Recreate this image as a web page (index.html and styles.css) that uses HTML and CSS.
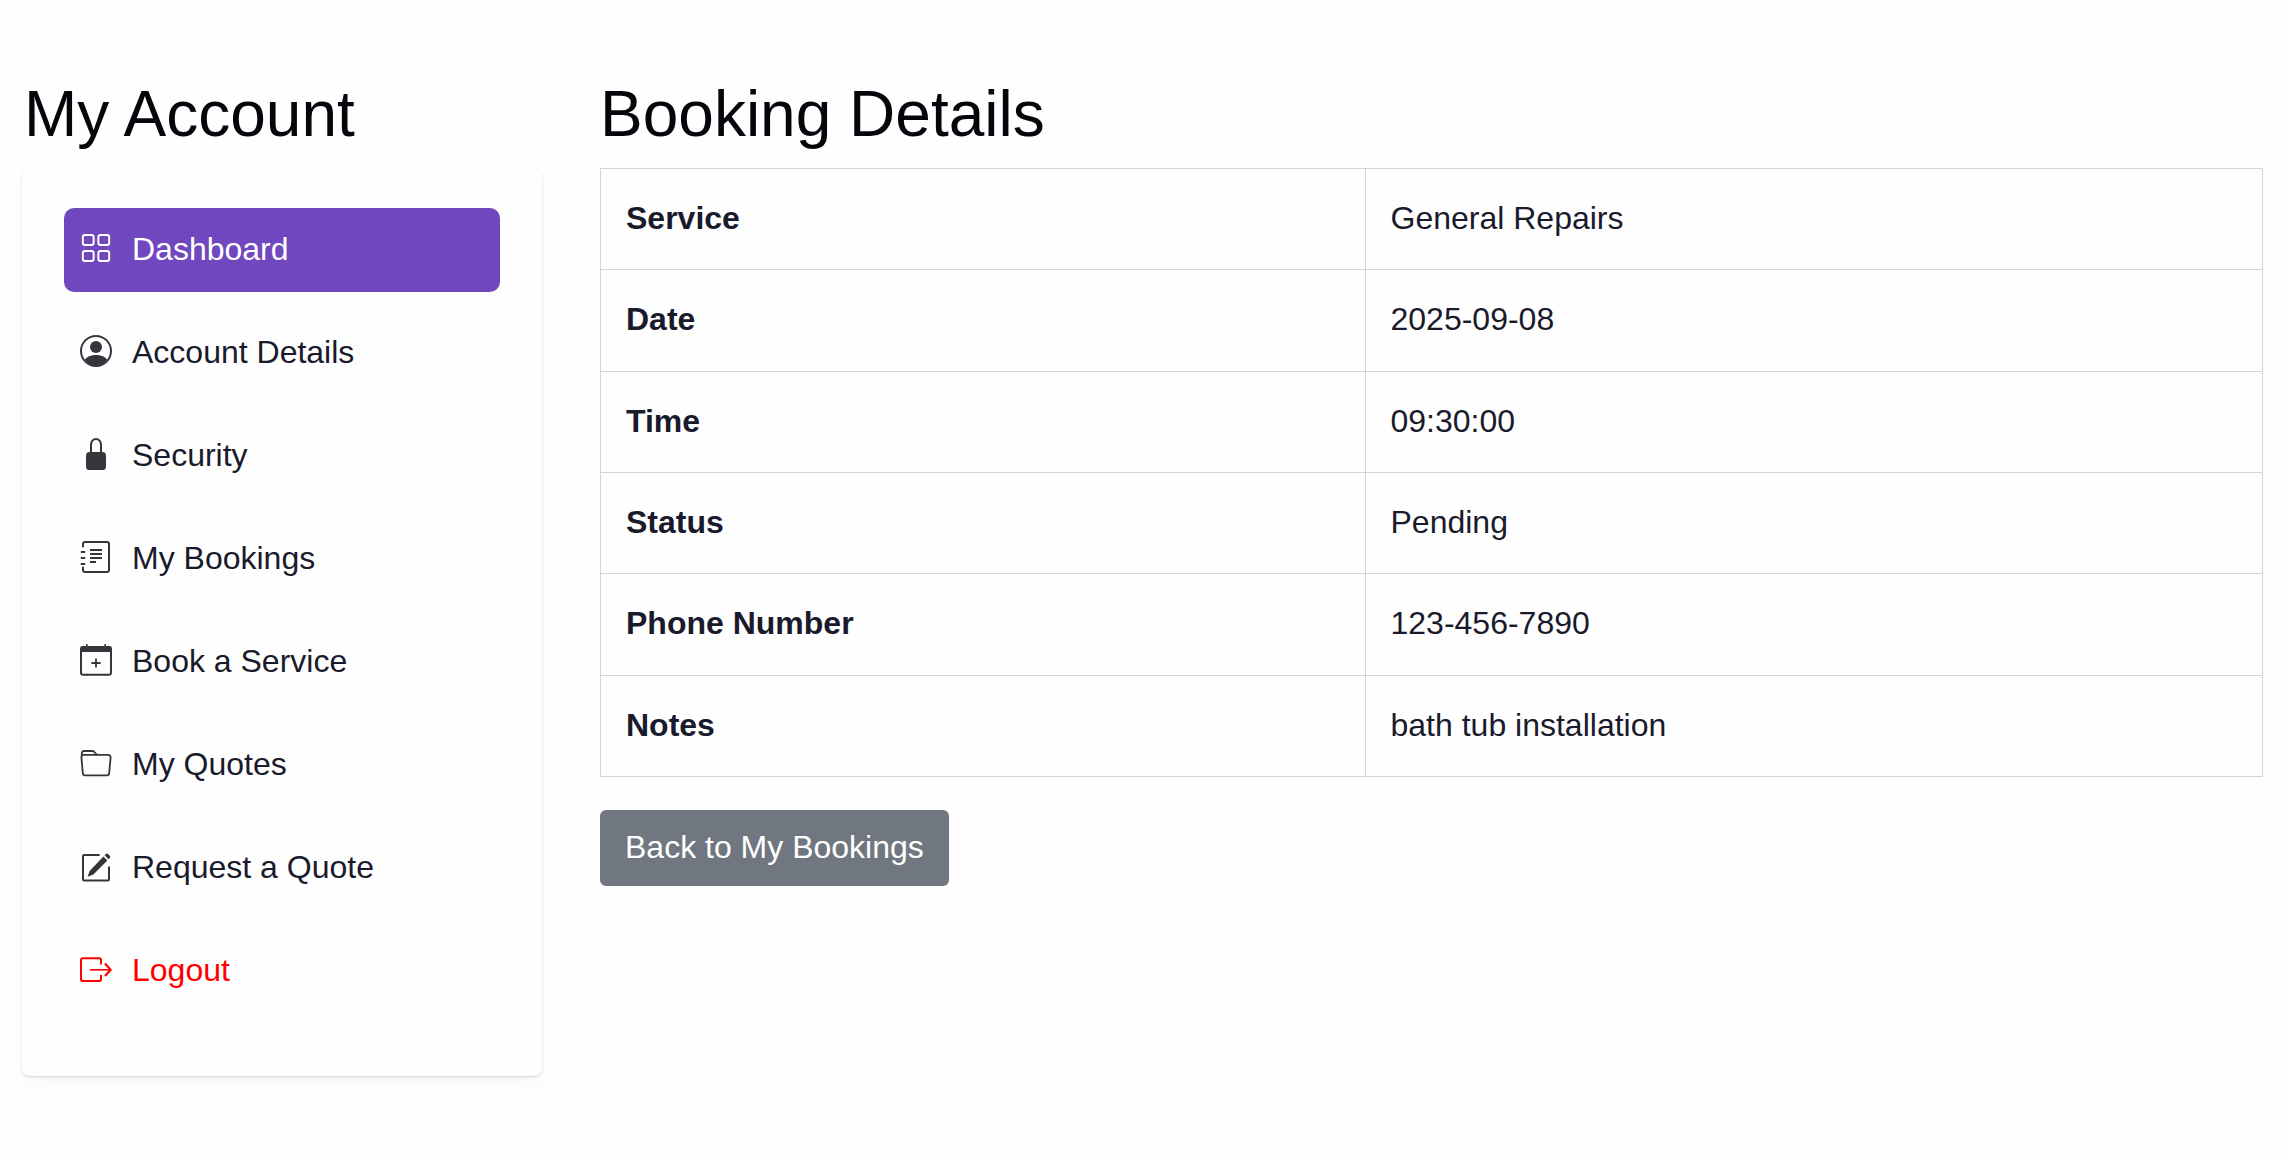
FILE: index.html
```html
<!DOCTYPE html>
<html lang="en">
<head>
    <meta charset="UTF-8">
    <meta name="viewport" content="width=device-width, initial-scale=1.0">
    <title>Booking Details</title>
    <link rel="stylesheet" href="styles.css">
</head>
<body>
    <div class="page">
        <!-- Account menu -->
        <aside class="sidebar">
            <h2>My Account</h2>
            <nav class="account-nav">
                <ul>
                    <li>
                        <a href="#dashboard" class="nav-link active">
                            <svg class="icon" viewBox="0 0 16 16" aria-hidden="true">
                                <g fill="none" stroke="currentColor">
                                    <rect x="1.400" y="1.500" width="5.400" height="5" rx="1"/>
                                    <rect x="9.200" y="1.500" width="5.400" height="5" rx="1"/>
                                    <rect x="1.400" y="9.500" width="5.400" height="5" rx="1"/>
                                    <rect x="9.200" y="9.500" width="5.400" height="5" rx="1"/>
                                </g>
                            </svg>
                            Dashboard
                        </a>
                    </li>
                    <li>
                        <a href="#account" class="nav-link">
                            <svg class="icon" viewBox="0 0 16 16" aria-hidden="true">
                                <circle cx="8" cy="8" r="7.500" fill="none" stroke="currentColor"/>
                                <circle cx="8" cy="6" r="3"/>
                                <path d="M13.6 12.4C12.8 11.2 11.2 10 8 10s-4.800 1.200-5.600 2.400A7.400 7.400 0 0 0 8 15.600a7.400 7.400 0 0 0 5.600-3.200z"/>
                            </svg>
                            Account Details
                        </a>
                    </li>
                    <li>
                        <a href="#security" class="nav-link">
                            <svg class="icon" viewBox="0 0 16 16" aria-hidden="true">
                                <rect x="3" y="7" width="10" height="9" rx="1.8"/>
                                <path d="M5.500 7.500V3.200a2.500 2.700 0 0 1 5 0v4.300" fill="none" stroke="currentColor"/>
                            </svg>
                            Security
                        </a>
                    </li>
                    <li>
                        <a href="#bookings" class="nav-link">
                            <svg class="icon" viewBox="0 0 16 16" aria-hidden="true">
                                <g fill="none" stroke="currentColor">
                                    <path d="M1.500 3.100V1.400a.9.9 0 0 1 .9-.9h11.200a.9.9 0 0 1 .9.900v13.200a.9.9 0 0 1-.9.900H2.400a.9.9 0 0 1-.9-.900v-1.700"/>
                                    <path d="M.4 5.500h2.200M.4 8.500h2.200M.4 11.500h2.200M5 4.500h6M5 6.500h6M5 8.500h6M5 10.500h3"/>
                                </g>
                            </svg>
                            My Bookings
                        </a>
                    </li>
                    <li>
                        <a href="#book" class="nav-link">
                            <svg class="icon" viewBox="0 0 16 16" aria-hidden="true">
                                <path d="M0 4V2.200A1.200 1.200 0 0 1 1.200 1H3V0h.8v1h8.400V0h.8v1h1.800A1.200 1.200 0 0 1 16 2.200V4z"/>
                                <path d="M.5 3.500v11a.9.9 0 0 0 .9.900h13.200a.9.9 0 0 0 .9-.900v-11" fill="none" stroke="currentColor"/>
                                <path d="M8 7.200v4.600M5.700 9.500h4.600" fill="none" stroke="currentColor" stroke-width=".9"/>
                            </svg>
                            Book a Service
                        </a>
                    </li>
                    <li>
                        <a href="#quotes" class="nav-link">
                            <svg class="icon" viewBox="0 0 16 16" aria-hidden="true">
                                <g fill="none" stroke="currentColor" stroke-width=".9">
                                    <path d="M1.900 3.900h12.200a1.200 1.200 0 0 1 1.200 1.300l-.7 7.900a1.200 1.200 0 0 1-1.200 1.100H2.600a1.200 1.200 0 0 1-1.200-1.100L.7 5.200a1.200 1.200 0 0 1 1.200-1.300z"/>
                                    <path d="M.9 4.300V3.100A1.100 1.100 0 0 1 2 2h4.400c.9 0 1.300 1.900 2.500 1.900"/>
                                </g>
                            </svg>
                            My Quotes
                        </a>
                    </li>
                    <li>
                        <a href="#request" class="nav-link">
                            <svg class="icon" viewBox="0 0 16 16" aria-hidden="true">
                                <path d="M9.800 2.500H2.100a.6.6 0 0 0-.6.600v11.500a.6.6 0 0 0 .6.600h11.800a.6.6 0 0 0 .6-.600V8.200" fill="none" stroke="currentColor"/>
                                <path d="M11.700 3.200l2 2-7 7-2.900 1.200 1-2.900z"/>
                                <path d="M12.300 2.600l.8-.7a.6.6 0 0 1 .8 0l1.100 1.100a.6.6 0 0 1 0 .8l-.7.800z"/>
                            </svg>
                            Request a Quote
                        </a>
                    </li>
                    <li>
                        <a href="#logout" class="nav-link logout">
                            <svg class="icon" viewBox="0 0 16 16" aria-hidden="true">
                                <g fill="none" stroke="currentColor">
                                    <path d="M10.500 5.800V3.500a.9.9 0 0 0-.9-.9H1.400a.9.9 0 0 0-.9.900v9.600a.9.9 0 0 0 .9.900h8.200a.9.9 0 0 0 .9-.900V11"/>
                                    <path d="M5 8.400h10" stroke-width=".8"/>
                                    <path d="M12.500 5.300l2.800 3.100-2.800 3.100" stroke-width="1.100"/>
                                </g>
                            </svg>
                            Logout
                        </a>
                    </li>
                </ul>
            </nav>
        </aside>

        <!-- Booking details -->
        <main class="content">
            <h2>Booking Details</h2>
            <table class="details-table">
                <tbody>
                    <tr>
                        <th scope="row">Service</th>
                        <td>General Repairs</td>
                    </tr>
                    <tr>
                        <th scope="row">Date</th>
                        <td>2025-09-08</td>
                    </tr>
                    <tr>
                        <th scope="row">Time</th>
                        <td>09:30:00</td>
                    </tr>
                    <tr>
                        <th scope="row">Status</th>
                        <td>Pending</td>
                    </tr>
                    <tr>
                        <th scope="row">Phone Number</th>
                        <td>123-456-7890</td>
                    </tr>
                    <tr>
                        <th scope="row">Notes</th>
                        <td>bath tub installation</td>
                    </tr>
                </tbody>
            </table>
            <a href="#bookings" class="btn">Back to My Bookings</a>
        </main>
    </div>
</body>
</html>
```
FILE: styles.css
```css
* {
    box-sizing: border-box;
}

body {
    margin: 0;
    background: #fefefe;
    color: #191a2b;
    font-family: "Liberation Sans", Arial, sans-serif;
    font-size: 32px;
    line-height: 48px;
}

.page {
    display: grid;
    grid-template-columns: 520px 1fr;
    align-items: start;
    gap: 58px;
    padding: 76px 23px 76px 22px;
}

h2 {
    margin: 0 0 16px;
    color: #05050c;
    font-size: 64px;
    font-weight: 400;
    line-height: 76px;
}

.sidebar h2 {
    padding-left: 2px;
}

/* Account menu */
.account-nav {
    padding: 40px 42px 44px;
    border-radius: 8px;
    background: #fefefe;
    box-shadow: 0 8px 16px rgba(0, 0, 0, 0.03), 0 1px 2px rgba(0, 0, 0, 0.15);
}

.account-nav ul {
    margin: 0;
    padding: 0;
    list-style: none;
}

.account-nav li {
    margin-bottom: 19px;
}

.nav-link {
    display: flex;
    align-items: center;
    gap: 20px;
    padding: 17px 16px 19px;
    border-radius: 10px;
    color: #191a2b;
    text-decoration: none;
}

.nav-link.active {
    background: #7047be;
    color: #fff;
}

.nav-link.logout,
.nav-link.logout .icon {
    color: #fe0000;
}

.icon {
    width: 32px;
    height: 32px;
    margin-bottom: 2px;
    color: #35353c;
    fill: currentColor;
}

.nav-link.active .icon {
    color: #fff;
}

/* Booking details */
.details-table {
    width: 100%;
    height: 609px;
    margin-bottom: 33px;
    border-collapse: collapse;
}

.details-table th,
.details-table td {
    padding: 25px 25px 27px;
    border: 1px solid #d4d4d6;
    text-align: left;
}

.details-table th {
    width: 46%;
}

.btn {
    display: inline-block;
    padding: 13px 25px 15px;
    border-radius: 6px;
    background: #707780;
    color: #fff;
    text-decoration: none;
}
```
